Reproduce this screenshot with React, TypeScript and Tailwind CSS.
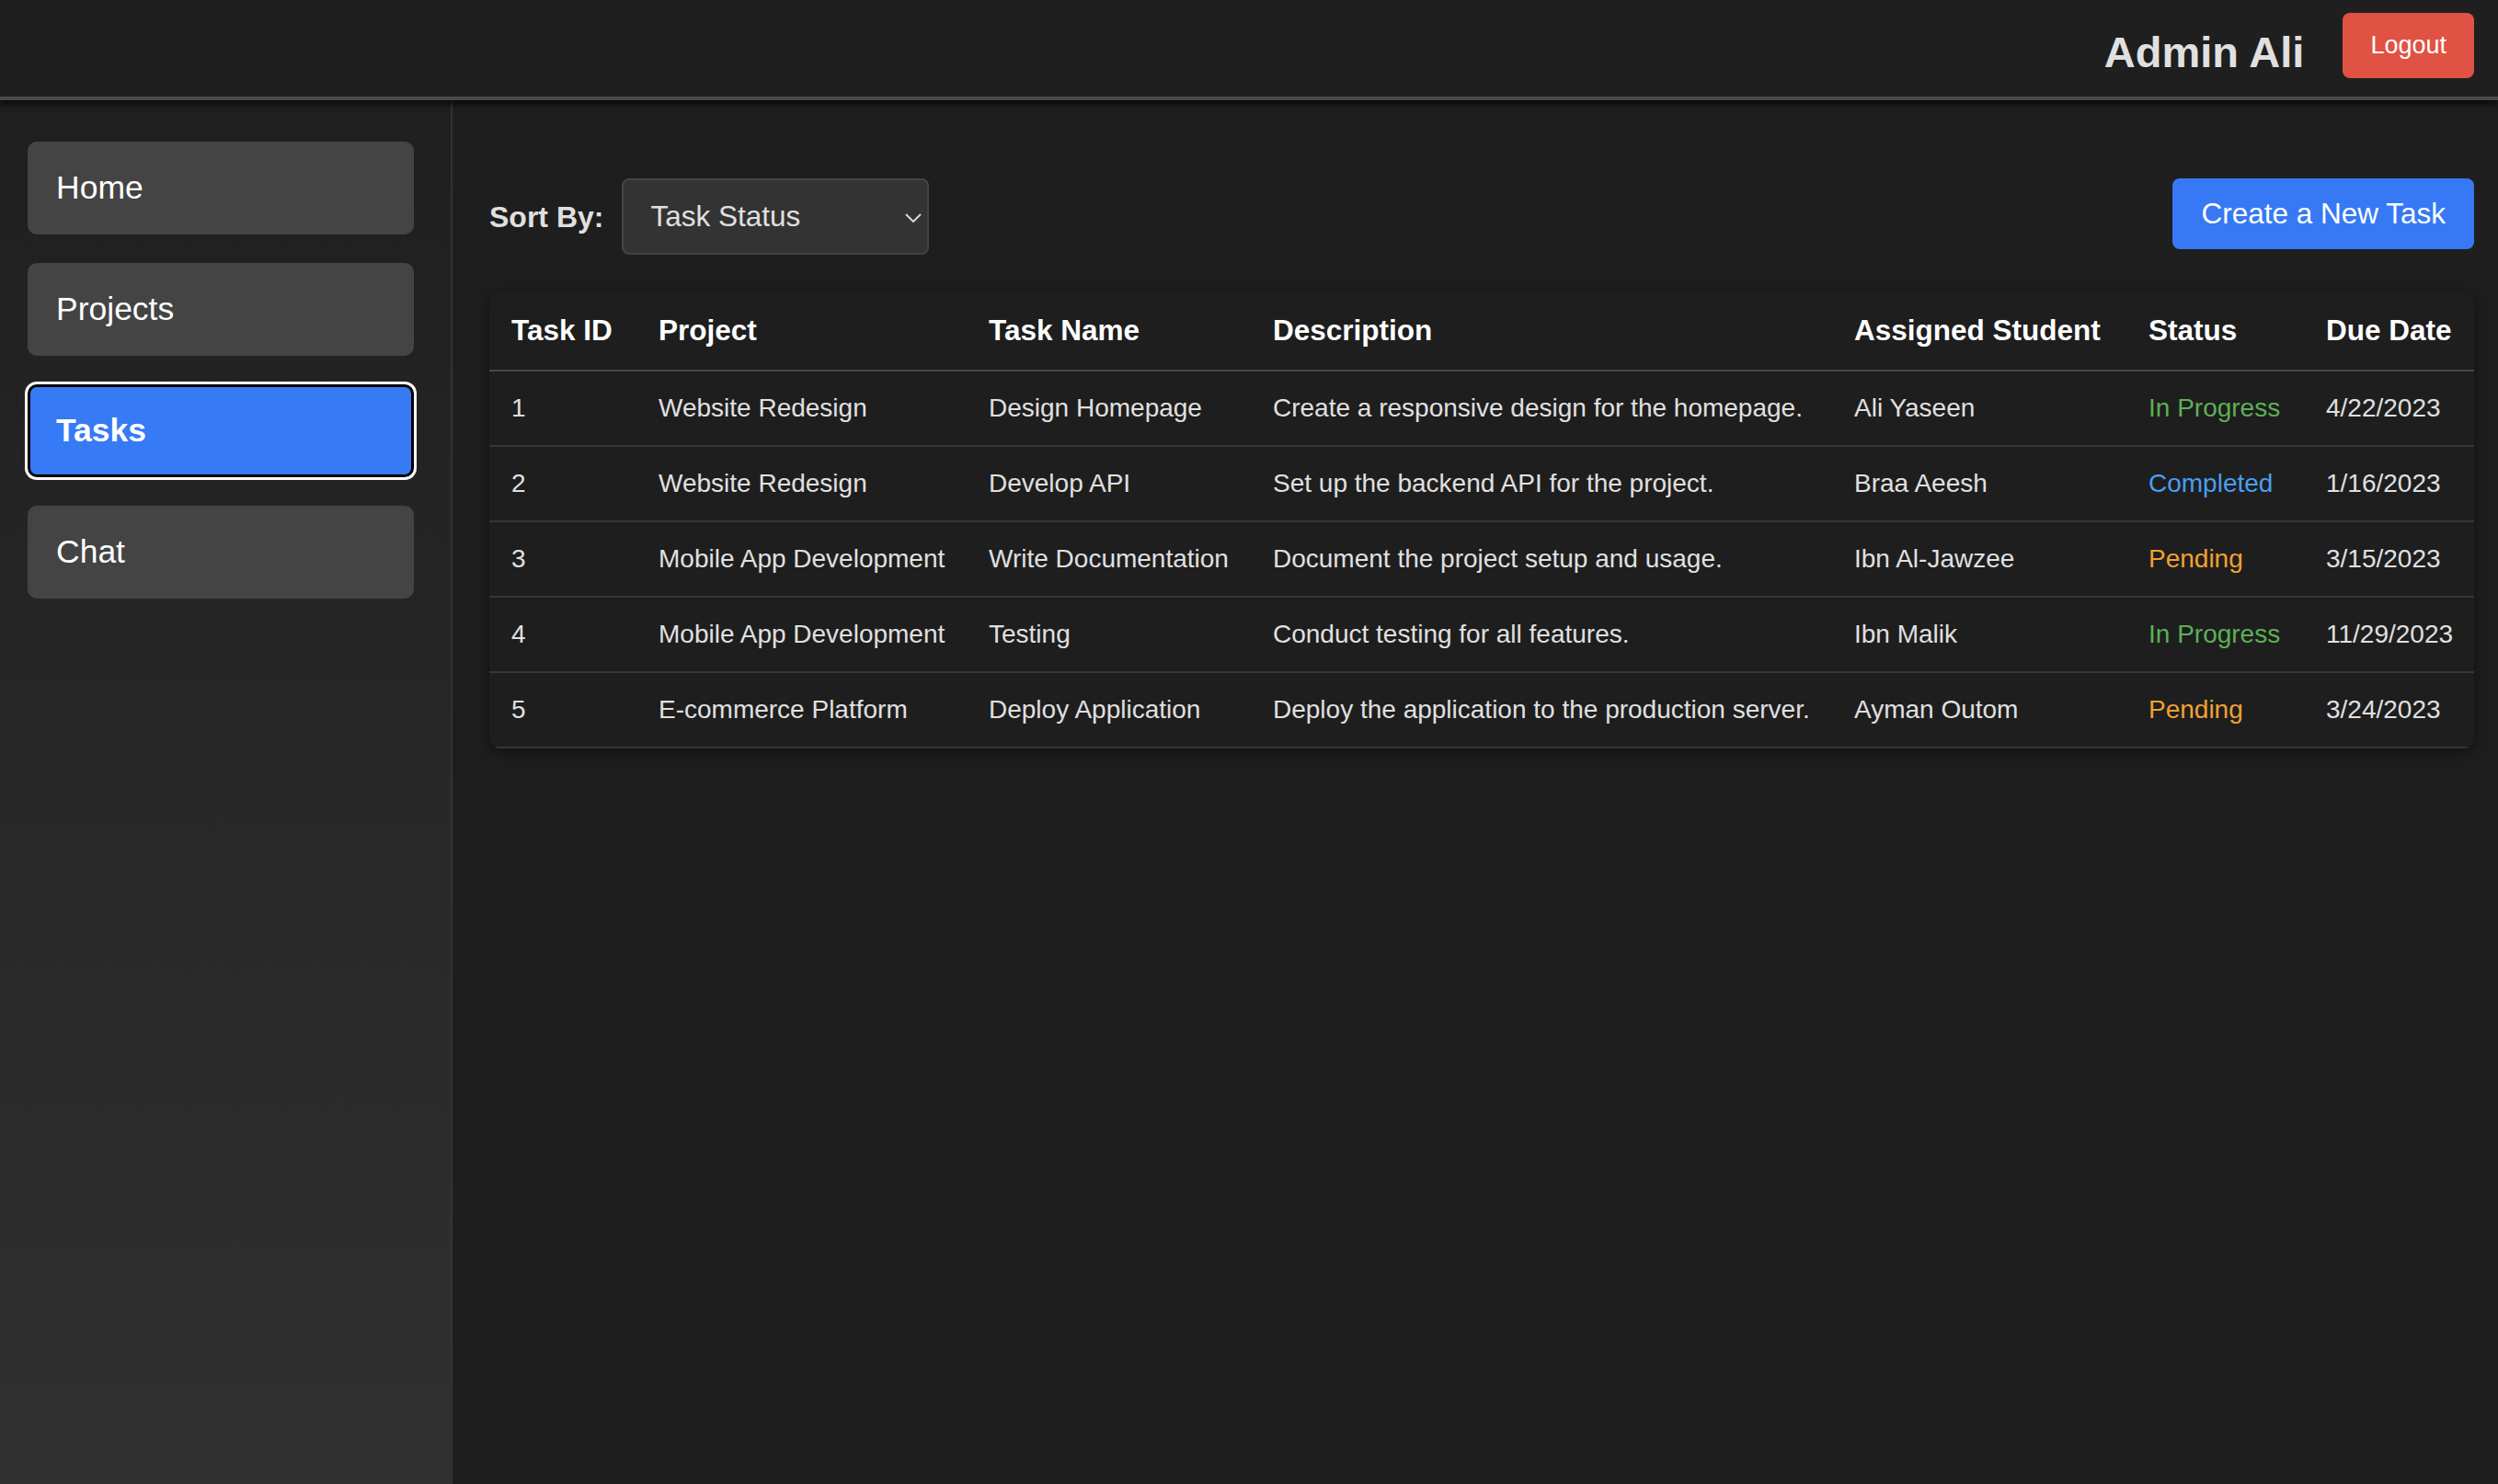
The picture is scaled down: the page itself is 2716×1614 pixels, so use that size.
import { useState } from 'react';

type Task = {
  id: number;
  project: string;
  name: string;
  description: string;
  student: string;
  status: 'In Progress' | 'Completed' | 'Pending';
  dueDate: string;
};

const tasks: Task[] = [
  {
    id: 1,
    project: 'Website Redesign',
    name: 'Design Homepage',
    description: 'Create a responsive design for the homepage.',
    student: 'Ali Yaseen',
    status: 'In Progress',
    dueDate: '4/22/2023',
  },
  {
    id: 2,
    project: 'Website Redesign',
    name: 'Develop API',
    description: 'Set up the backend API for the project.',
    student: 'Braa Aeesh',
    status: 'Completed',
    dueDate: '1/16/2023',
  },
  {
    id: 3,
    project: 'Mobile App Development',
    name: 'Write Documentation',
    description: 'Document the project setup and usage.',
    student: 'Ibn Al-Jawzee',
    status: 'Pending',
    dueDate: '3/15/2023',
  },
  {
    id: 4,
    project: 'Mobile App Development',
    name: 'Testing',
    description: 'Conduct testing for all features.',
    student: 'Ibn Malik',
    status: 'In Progress',
    dueDate: '11/29/2023',
  },
  {
    id: 5,
    project: 'E-commerce Platform',
    name: 'Deploy Application',
    description: 'Deploy the application to the production server.',
    student: 'Ayman Outom',
    status: 'Pending',
    dueDate: '3/24/2023',
  },
];

const statusColor: Record<Task['status'], string> = {
  'In Progress': 'text-[#5cb055]',
  Completed: 'text-[#4a9ef0]',
  Pending: 'text-[#f2a033]',
};

const navItems = ['Home', 'Projects', 'Tasks', 'Chat'];

function Sidebar({ active }: { active: string }) {
  return (
    <aside className="flex w-[492px] shrink-0 flex-col gap-[31px] border-r-2 border-[#333] bg-gradient-to-b from-[#1f1f1f] to-[#303030] pl-[30px] pt-[45px]">
      {navItems.map((item) =>
        item === active ? (
          <button
            key={item}
            className="flex h-[101px] w-[420px] items-center rounded-[10px] border-[3px] border-black bg-[#377af5] pl-[28px] text-left text-[35.5px] font-bold text-white ring-[3px] ring-white"
          >
            {item}
          </button>
        ) : (
          <button
            key={item}
            className="flex h-[101px] w-[420px] items-center rounded-[10px] bg-[#444] pl-[31px] text-left text-[35.5px] text-white"
          >
            {item}
          </button>
        )
      )}
    </aside>
  );
}

function App() {
  const [sortBy, setSortBy] = useState('status');

  return (
    <div
      className="flex h-[1614px] flex-col overflow-hidden bg-[#1e1e1e] text-[#e0e0e0]"
      style={{ fontFamily: '"Liberation Sans", Arial, sans-serif' }}
    >
      {/* Header */}
      <header className="relative z-10 flex h-[109px] shrink-0 items-start justify-end gap-[42px] border-b-4 border-[#4a4a4a] bg-[#1f1f1f] pr-[26px] shadow-[0_5px_6px_rgba(0,0,0,0.6)]">
        <h1 className="mt-[33px] text-[47px] leading-[47px] font-bold text-[#e0e0e0]">
          Admin Ali
        </h1>
        <button className="mt-[14px] h-[71px] rounded-[8px] bg-[#e05243] px-[30px] text-[27px] text-white">
          Logout
        </button>
      </header>

      <div className="flex flex-1">
        <Sidebar active="Tasks" />

        {/* Main */}
        <main className="flex-1 pl-[40px] pr-[26px] pt-[85px]">
          <div className="flex items-start justify-between">
            <div className="flex items-center gap-[20px]">
              <label className="text-[32px] font-bold text-[#e0e0e0]">
                Sort By:
              </label>
              <div className="relative">
                <select
                  value={sortBy}
                  onChange={(e) => setSortBy(e.target.value)}
                  className="h-[83px] w-[334px] appearance-none rounded-[8px] border-2 border-[#444] bg-[#333] pl-[29px] text-[31.5px] text-[#e0e0e0] outline-none"
                >
                  <option value="status">Task Status</option>
                  <option value="project">Project</option>
                  <option value="due">Due Date</option>
                </select>
                <svg
                  className="pointer-events-none absolute right-[8px] top-[38px] h-[10px] w-[18px]"
                  viewBox="0 0 18 10"
                  fill="none"
                  stroke="#d8d8d8"
                  strokeWidth="2"
                >
                  <path d="M1 1l8 8 8-8" />
                </svg>
              </div>
            </div>

            <button className="h-[77px] rounded-[8px] bg-[#3779f4] px-[31px] text-[31.5px] text-white">
              Create a New Task
            </button>
          </div>

          {/* Tabla */}
          <div className="mt-[41px] overflow-hidden rounded-[12px] bg-[#1e1e1e] shadow-[0_4px_14px_rgba(0,0,0,0.45)]">
            <table className="w-full table-fixed border-collapse text-left">
              <colgroup>
                <col className="w-[160px]" />
                <col className="w-[359px]" />
                <col className="w-[309px]" />
                <col className="w-[632px]" />
                <col className="w-[320px]" />
                <col className="w-[193px]" />
                <col className="w-[185px]" />
              </colgroup>
              <thead>
                <tr className="h-[85px] border-b-2 border-[#474747]">
                  {[
                    'Task ID',
                    'Project',
                    'Task Name',
                    'Description',
                    'Assigned Student',
                    'Status',
                    'Due Date',
                  ].map((h) => (
                    <th
                      key={h}
                      className="whitespace-nowrap px-[24px] text-[31.5px] font-bold text-white"
                    >
                      {h}
                    </th>
                  ))}
                </tr>
              </thead>
              <tbody>
                {tasks.map((t) => (
                  <tr key={t.id} className="h-[82px] border-b-2 border-[#363636]">
                    <td className="px-[24px] text-[28px]">{t.id}</td>
                    <td className="whitespace-nowrap px-[24px] text-[28px]">
                      {t.project}
                    </td>
                    <td className="whitespace-nowrap px-[24px] text-[28px]">
                      {t.name}
                    </td>
                    <td className="whitespace-nowrap px-[24px] text-[28px]">
                      {t.description}
                    </td>
                    <td className="whitespace-nowrap px-[24px] text-[28px]">
                      {t.student}
                    </td>
                    <td
                      className={`whitespace-nowrap px-[24px] text-[28px] ${statusColor[t.status]}`}
                    >
                      {t.status}
                    </td>
                    <td className="whitespace-nowrap px-[24px] text-[28px]">
                      {t.dueDate}
                    </td>
                  </tr>
                ))}
              </tbody>
            </table>
          </div>
        </main>
      </div>
    </div>
  );
}

export default App;
